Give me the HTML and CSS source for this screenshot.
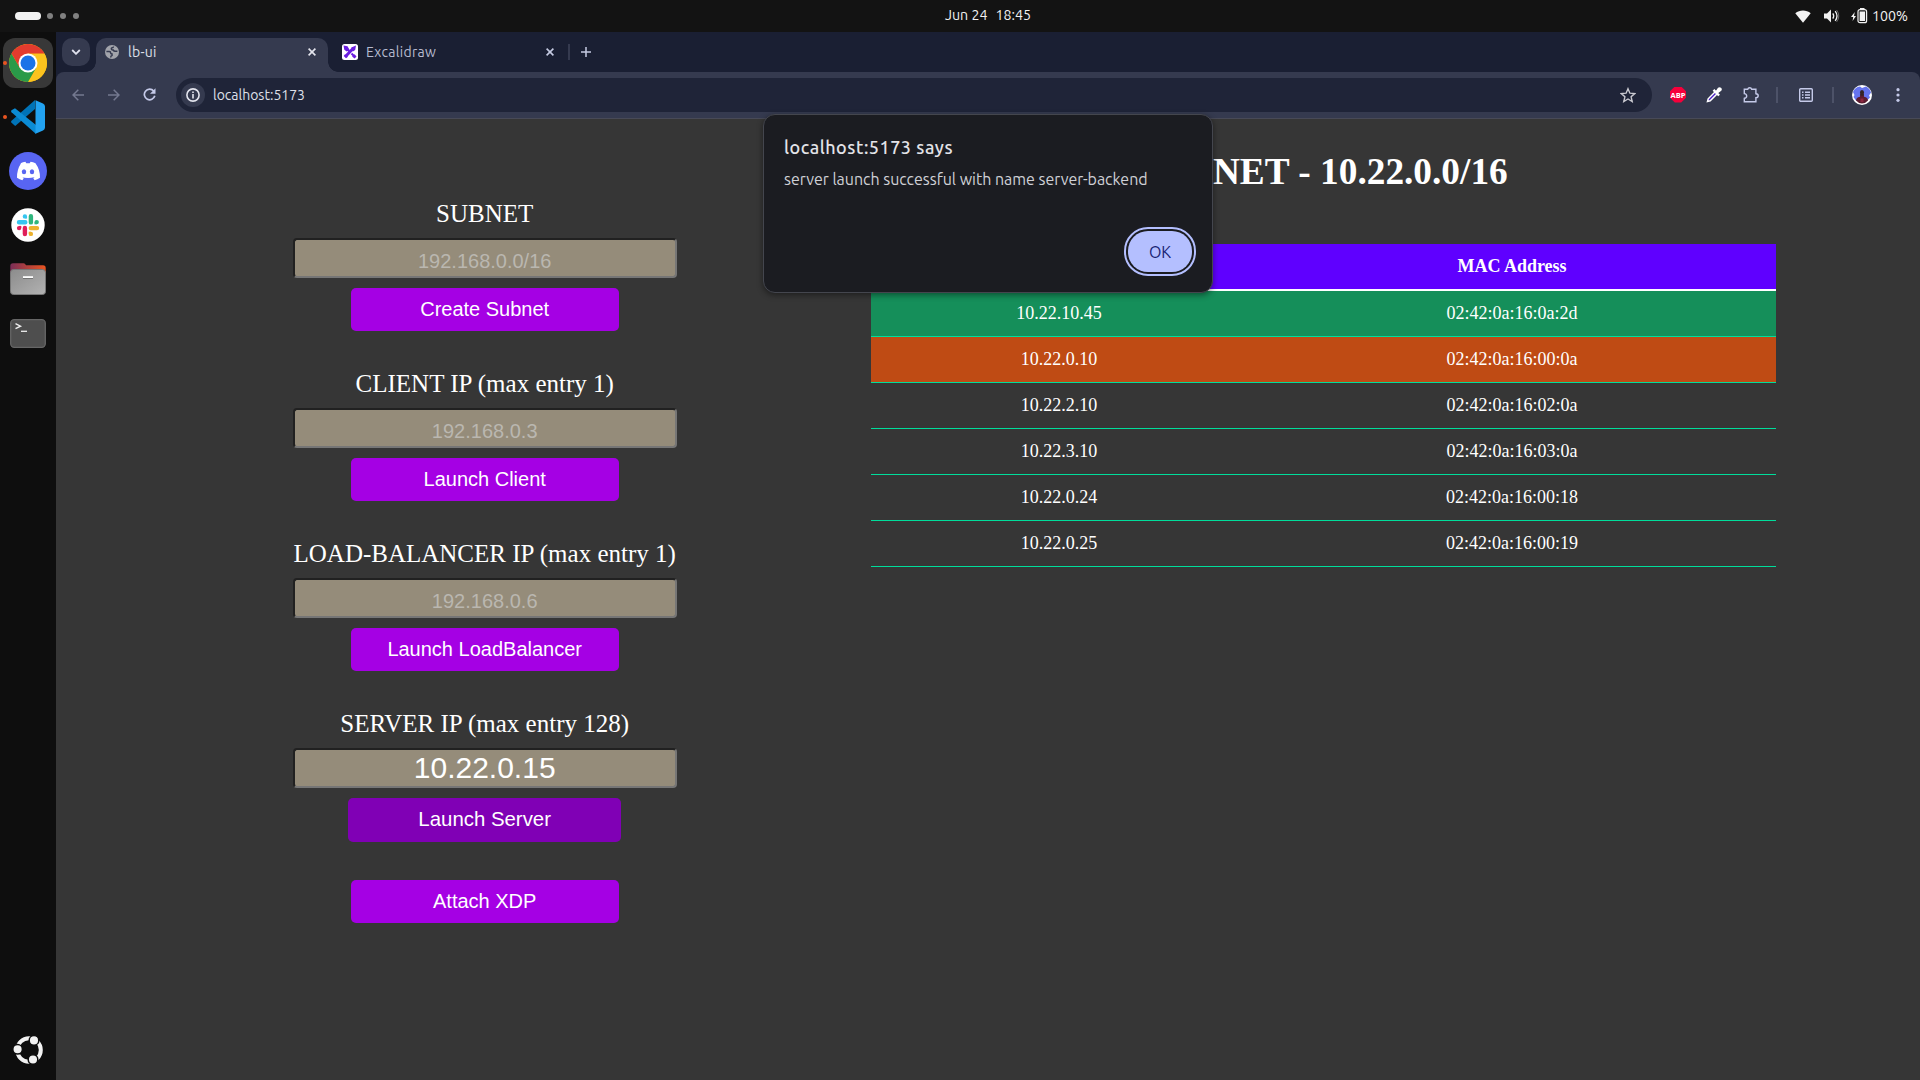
FILE: index.html
```html
<!DOCTYPE html>
<html lang="en">
<head>
<meta charset="utf-8">
<title>lb-ui</title>
<link rel="stylesheet" href="styles.css">
</head>
<body>
<div class="desktop">
  <header class="topbar">
    <div class="workspaces"><i class="ws-active"></i><i class="ws"></i><i class="ws"></i><i class="ws"></i></div>
    <div class="clock"><span>Jun 24</span><span>18:45</span></div>
    <div class="tray">
      <svg class="wifi" width="16" height="13" viewBox="0 0 16 13"><path d="M.3 3.2C4.600-.5 11.400-.5 15.700 3.200L8 12.700z" fill="#f2f2f2"/></svg>
      <svg class="volume" width="16" height="14" viewBox="0 0 16 14"><path d="M0 4.500h3L7 .5v13L3 9.500H0z" fill="#f2f2f2"/><path d="M8.800 4.400q1.800 2.600 0 5.200M11.200 2.200q3.600 4.800 0 9.600" fill="none" stroke="#f2f2f2" stroke-width="1.300"/><path d="M12.600 1q4.400 6 0 12" fill="none" stroke="#888" stroke-width=".7"/></svg>
      <svg class="battery" width="17" height="16" viewBox="0 0 17 16"><path d="M3.800 4L0 9h2.200L1.600 13 5 8H3z" fill="#f2f2f2"/><rect x="7" y="1.700" width="8.600" height="13" rx="2" fill="none" stroke="#f2f2f2" stroke-width="1.200"/><rect x="8.600" y="3.500" width="5.500" height="9.500" fill="#f2f2f2"/><path d="M9 0h4.500v1.500H9z" fill="#f2f2f2"/></svg>
      <span class="percent">100%</span>
    </div>
  </header>

  <nav class="dock">
    <div class="app active running">
      <svg width="38" height="38" viewBox="0 0 38 38"><circle cx="19" cy="19" r="19" fill="#fbbc04"/><path d="M19 9.500h16.450A19 19 0 0 1 19 38l8.200-14.200z" fill="#fcc31e"/><path d="M2.550 9.500A19 19 0 0 0 19 38l8.200-14.200L10.800 23.800z" fill="#2a9a49"/><path d="M2.550 9.500A19 19 0 0 1 35.450 9.500H19l-8.200 14.200z" fill="#e33b2e"/><circle cx="19" cy="19" r="9.500" fill="#fff"/><circle cx="19" cy="19" r="7.500" fill="#1a73e8"/></svg>
    </div>
    <div class="app running">
      <svg width="34" height="34" viewBox="0 0 34 34"><path d="M24 0v9L4.200 26 .5 22.700q-.8-1 0-1.900z" fill="#0073b7"/><path d="M.5 12.200q-.8-1 0-1.900L4 8.200 25 25v9L.5 12.200z" fill="#0b8bd4"/><path d="M24.500.2L32 3.600q2 .8 2 3v20.800q0 2.200-2 3l-7.500 3.400V.2z" fill="#22a2f0"/></svg>
    </div>
    <div class="app">
      <svg width="38" height="38" viewBox="0 0 38 38"><circle cx="19" cy="19" r="19" fill="#5865f2"/><path d="M11.500 11.200q2.500-1.200 4.900-1.500l.9 1.500h3.400l.9-1.500q2.500.3 4.900 1.500 4.800 6.800 4.500 14.600-2.600 1.800-5.400 2.400l-1.400-2.200 1.500-.8h-12.400l1.500.8-1.400 2.200q-2.800-.6-5.400-2.400-.300-7.800 4-14.600z" fill="#fff"/><path d="M13 25q6 2 12 0l-.5-1.500h-11z" fill="#fff"/><ellipse cx="15" cy="19.700" rx="2.200" ry="2.500" fill="#5865f2"/><ellipse cx="23" cy="19.700" rx="2.200" ry="2.500" fill="#5865f2"/></svg>
    </div>
    <div class="app">
      <svg width="34" height="34" viewBox="0 0 34 34"><circle cx="17" cy="17" r="16.700" fill="#fff"/><g stroke-width="4.400" stroke-linecap="round"><path d="M8 14.200h6.300M13.900 8.400v.01" stroke="#36c5f0"/><path d="M19.900 8.200v6.200M25.700 14.100v.01" stroke="#2eb67d"/><path d="M19.800 20.100H26M19.900 25.900v.01" stroke="#ecb22e"/><path d="M13.900 20v6.100M8.100 20.100v.01" stroke="#e01e5a"/></g><path d="M13.900 8.400h2.200v2.200h-2.200z" fill="#36c5f0"/><path d="M23.500 14.100h2.200v2.200h-2.200z" fill="#2eb67d"/><path d="M17.700 23.700h2.200v2.200h-2.200z" fill="#ecb22e"/><path d="M8.100 17.900h2.200v2.200H8.100z" fill="#e01e5a"/></svg>
    </div>
    <div class="app">
      <svg width="36" height="32" viewBox="0 0 36 32"><defs><linearGradient id="tab"><stop offset="0" stop-color="#7b2e57"/><stop offset="1" stop-color="#e95420"/></linearGradient><linearGradient id="body" x2="1" y2="1"><stop offset="0" stop-color="#8c8c8c"/><stop offset="1" stop-color="#b2b2b2"/></linearGradient></defs><path d="M3 .200h10.500q1 0 1.600.800l.9 1.200h17q2.700 0 2.700 2.800V20H.3V3q0-2.800 2.700-2.800z" fill="url(#tab)"/><rect x=".5" y="6.500" width="35" height="25" rx="3" fill="url(#body)" stroke="#777"/><path d="M13 13.200h10v1.900H13z" fill="#fff"/><path d="M13 15.200h10v.8H13z" fill="#666"/></svg>
    </div>
    <div class="app">
      <svg width="36" height="29" viewBox="0 0 36 29"><rect x=".7" y=".7" width="34.600" height="27.600" rx="3.500" fill="#4e4e4e" stroke="#666" stroke-width="1.300"/><path d="M5.500 4.700l5 2.500-5 2.500" fill="none" stroke="#eee" stroke-width="1.400"/><path d="M11 12.300h6" stroke="#eee" stroke-width="1.300"/></svg>
    </div>
    <div class="app launcher">
      <svg width="30" height="28" viewBox="0 0 30 28"><circle cx="16" cy="14" r="11.800" fill="none" stroke="#f2f2f2" stroke-width="4"/><g fill="#f2f2f2" stroke="#0e0e0e" stroke-width="1.500"><circle cx="4.600" cy="13.300" r="4.800"/><circle cx="21" cy="4.400" r="4.800"/><circle cx="20" cy="23.500" r="4.800"/></g></svg>
    </div>
  </nav>

  <main class="browser">
    <div class="tabstrip">
      <button class="tabsearch"><svg width="10" height="6" viewBox="0 0 10 6"><path d="M1.200 1l3.800 3.800L8.800 1" fill="none" stroke="#e0e2ee" stroke-width="1.800"/></svg></button>
      <div class="tab current">
        <svg width="14" height="14" viewBox="0 0 14 14"><circle cx="7" cy="7" r="7" fill="#a2a4ab"/><path d="M1.400 6.500h3q1.200 0 1.200 1.200T7 8.900v1.500q-1.300.1-1.300 2.100M8.500 1.500q-.2 1.300-1.300 1.300-.9 0-.9 1t1.100 1.100h.8q.6 1.400 1.900 1.400h2.300" fill="none" stroke="#353a4f" stroke-width="1.500"/></svg>
        <span>lb-ui</span>
        <svg class="close" width="8" height="8" viewBox="0 0 8 8"><path d="M.6.6l6.800 6.800M7.400.6L.6 7.400" stroke="#e4e5ee" stroke-width="1.600"/></svg>
      </div>
      <div class="tab other">
        <svg width="16" height="16" viewBox="0 0 16 16"><rect width="16" height="16" rx="2.500" fill="#fff"/><path d="M3.500 12.500L11.500 4" stroke="#6a1ee0" stroke-width="3"/><path d="M5 5l2.300 2.300M9.500 9.500l3 3" stroke="#6a1ee0" stroke-width="2"/><path d="M1.500 1.500l4 .8 2 3.400-2.800 1.800-2.400-1.800zM9.300 3.400l4.700-2-.8 4.600-2.300 1.600zM1.700 12l2.300 2.300 2-1.600L3 10.200zM12.500 10.300l2 2.200-1.900 2-2.500-2z" fill="#6a1ee0"/></svg>
        <span>Excalidraw</span>
        <svg class="close" width="8" height="8" viewBox="0 0 8 8"><path d="M.6.6l6.800 6.800M7.400.6L.6 7.400" stroke="#c5cae2" stroke-width="1.600"/></svg>
      </div>
      <i class="tabsep"></i>
      <svg class="newtab" width="10" height="10" viewBox="0 0 10 10"><path d="M5 0v10M0 5h10" stroke="#c5cae2" stroke-width="1.500"/></svg>
    </div>

    <div class="toolbar">
      <svg class="back" width="12" height="12" viewBox="0 0 12 12"><path d="M12 6H1.200M6.300.7L1 6l5.300 5.300" fill="none" stroke="#747990" stroke-width="1.500"/></svg>
      <svg class="forward" width="12" height="12" viewBox="0 0 12 12"><path d="M0 6h10.800M5.700.7L11 6l-5.300 5.300" fill="none" stroke="#747990" stroke-width="1.500"/></svg>
      <svg class="reload" width="13" height="13" viewBox="0 0 13 13"><path d="M10.700 3A5.300 5.300 0 1 0 11.800 7.800" fill="none" stroke="#c5cae9" stroke-width="1.700"/><path d="M12.500.3v5.500H7z" fill="#c5cae9"/></svg>
      <div class="omnibox">
        <span class="siteinfo"><svg width="14" height="14" viewBox="0 0 14 14"><circle cx="7" cy="7" r="6.100" fill="none" stroke="#e4e5ee" stroke-width="1.600"/><path d="M7 6v4.500M7 3.400v1.700" stroke="#e4e5ee" stroke-width="1.600"/></svg></span>
        <span class="url">localhost:5173</span>
        <svg class="star" width="16" height="16" viewBox="0 0 16 16"><path d="M8 1.700l1.900 4.500 4.800.4-3.600 3.200 1.100 4.700L8 12l-4.200 2.500 1.100-4.700L1.300 6.600l4.800-.4z" fill="none" stroke="#c9c9d0" stroke-width="1.400"/></svg>
      </div>
      <span class="abp">ABP</span>
      <svg class="picker" width="16" height="16" viewBox="0 0 16 16"><path d="M1.500 14.500l.7-2.700 7-7 2 2-7 7z" fill="#4c22c4" stroke="#fff" stroke-width="1.500"/><path d="M7.500 2.900l5.600 5.600M9.500 6.500l3.800-3.800" stroke="#fff" stroke-width="2.400"/><path d="M9.500 4.500L12 .8q1.500-1.300 3 0t.3 3L11.500 6.500z" fill="#fff"/></svg>
      <svg class="puzzle" width="17" height="16" viewBox="0 0 17 16"><path d="M1.300 2.300h3.400q.4-1.600 2-1.600t2 1.600h4.200v4.400q2.300.2 2.300 2t-2.300 2v4.100H1.300v-3.500q2.400-.2 2.400-2.300T1.300 6.600z" fill="none" stroke="#c5cae9" stroke-width="1.400"/></svg>
      <i class="sep"></i>
      <svg class="reader" width="14" height="14" viewBox="0 0 14 14"><rect x=".7" y=".7" width="12.600" height="12.600" rx="1" fill="none" stroke="#c5cae9" stroke-width="1.400"/><path d="M3 4.200h1.500M6 4.200h5M3 7h1.500M6 7h5M3 9.800h1.500M6 9.800h5" stroke="#c5cae9" stroke-width="1.400"/></svg>
      <i class="sep"></i>
      <svg class="avatar" width="20" height="20" viewBox="0 0 20 20"><circle cx="10" cy="10" r="10" fill="#fff"/><path d="M1 7Q3 2 8 1.500L10 3l4-1.500q4 2 5 6l-2 3 1 2-3 3H4L1.500 12l1-2z" fill="#6573ef"/><path d="M4 15.500q0-3 4-3.800L8.200 9h3.600l.2 2.700q4 .8 4 3.800-2.500 3-6 3t-6-3z" fill="#5c1c30"/><path d="M8 7.500Q7.800 5 10 5t2 2.500l-.5 3.200h-3z" fill="#352327"/><path d="M8.500 13.500h3V17h-3z" fill="#8c2740"/></svg>
      <svg class="more" width="4" height="14" viewBox="0 0 4 14"><g fill="#c5cae9"><circle cx="2" cy="1.700" r="1.600"/><circle cx="2" cy="7" r="1.600"/><circle cx="2" cy="12.300" r="1.600"/></g></svg>
    </div>

    <div class="page">
      <section class="controls">
        <div class="group"><label>SUBNET</label><input type="text" placeholder="192.168.0.0/16"><button class="action">Create Subnet</button></div>
        <div class="group"><label>CLIENT IP (max entry 1)</label><input type="text" placeholder="192.168.0.3"><button class="action">Launch Client</button></div>
        <div class="group"><label>LOAD-BALANCER IP (max entry 1)</label><input type="text" placeholder="192.168.0.6"><button class="action">Launch LoadBalancer</button></div>
        <div class="group"><label>SERVER IP (max entry 128)</label><input type="text" value="10.22.0.15"><button class="action pressed">Launch Server</button></div>
        <button class="action">Attach XDP</button>
      </section>
      <section class="network">
        <h1>SUBNET - 10.22.0.0/16</h1>
        <table>
          <colgroup><col class="ip"><col class="mac"></colgroup>
          <thead><tr><th>IP Address</th><th>MAC Address</th></tr></thead>
          <tbody>
            <tr class="client"><td>10.22.10.45</td><td>02:42:0a:16:0a:2d</td></tr>
            <tr class="balancer"><td>10.22.0.10</td><td>02:42:0a:16:00:0a</td></tr>
            <tr><td>10.22.2.10</td><td>02:42:0a:16:02:0a</td></tr>
            <tr><td>10.22.3.10</td><td>02:42:0a:16:03:0a</td></tr>
            <tr><td>10.22.0.24</td><td>02:42:0a:16:00:18</td></tr>
            <tr><td>10.22.0.25</td><td>02:42:0a:16:00:19</td></tr>
          </tbody>
        </table>
      </section>
    </div>

    <div class="dialog" role="alertdialog">
      <h2>localhost:5173 says</h2>
      <p>server launch successful with name server-backend</p>
      <button class="ok">OK</button>
    </div>
  </main>
</div>
</body>
</html>
```
FILE: styles.css
```css
* { box-sizing: border-box; }
body { margin: 0; background: #363636; overflow: hidden; }
svg { display: block; flex: none; }
button { border: 0; padding: 0; }

.desktop {
  display: grid;
  grid-template: 32px 1048px / 56px 1864px;
  width: 1920px;
  height: 1080px;
  font-family: Ubuntu, "Noto Sans", sans-serif;
}

/* System bar */
.topbar {
  grid-column: 1 / 3;
  display: grid;
  grid-template-columns: 1fr auto 1fr;
  align-items: center;
  background: #131313;
  color: #f2f2f2;
  font-size: 14.2px;
}
.workspaces { display: flex; align-items: center; gap: 7px; padding-left: 15px; }
.ws-active { width: 26px; height: 8px; border-radius: 4px; background: #f2f2f2; margin-right: -1px; }
.ws { width: 6px; height: 6px; border-radius: 50%; background: #808080; }
.clock { display: flex; gap: 8px; margin-left: 64px; padding-right: 8px; padding-bottom: 2px; }
.tray { display: flex; align-items: center; justify-content: flex-end; padding-right: 12px; }
.volume { margin-left: 13px; }
.battery { margin-left: 11px; margin-right: 4px; }

/* Dock */
.dock {
  display: flex;
  flex-direction: column;
  align-items: center;
  gap: 4px;
  padding: 6px 0 5px;
  background: #0e0e0e;
}
.app {
  position: relative;
  display: flex;
  align-items: center;
  justify-content: center;
  width: 50px;
  height: 50px;
  flex: none;
}
.app.active { background: #383838; border-radius: 12px; }
.app.running::before {
  content: "";
  position: absolute;
  left: 0;
  top: 23px;
  width: 4px;
  height: 4px;
  border-radius: 50%;
  background: #e95420;
}
.launcher { margin-top: auto; padding-right: 1px; }

/* Browser */
.browser { position: relative; display: flex; flex-direction: column; background: #1a1f33; }
.tabstrip { display: flex; align-items: flex-start; height: 40px; padding: 6px 0 0 6px; }
.tabsearch {
  display: flex;
  align-items: center;
  justify-content: center;
  width: 28px;
  height: 28px;
  border-radius: 10px;
  background: #353a4f;
}
.tab { display: flex; align-items: center; color: #dfe0ea; font-size: 14px; letter-spacing: .3px; }
.tab.current {
  position: relative;
  width: 232px;
  height: 34px;
  margin-left: 6px;
  padding: 0 12px 6px 9px;
  border-radius: 10px 10px 0 0;
  background: #353a4f;
}
.tab.current::before, .tab.current::after {
  content: "";
  position: absolute;
  bottom: 0;
  width: 10px;
  height: 10px;
}
.tab.current::before { left: -10px; background: radial-gradient(circle at 0 0, transparent 9.5px, #353a4f 10px); }
.tab.current::after { right: -10px; background: radial-gradient(circle at 100% 0, transparent 9.5px, #353a4f 10px); }
.tab span { margin-left: 9px; }
.tab .close { margin-left: auto; }
.tab.other { width: 226px; height: 28px; padding-left: 14px; padding-right: 0; color: #b7bbd0; }
.tab.other span { margin-left: 8px; }
.tabsep { width: 2px; height: 16px; margin: 6px 0 0 14px; background: #353a4f; }
.newtab { margin: 9px 0 0 11px; }

.toolbar {
  display: flex;
  align-items: center;
  height: 47px;
  padding-bottom: 1px;
  border-bottom: 1px solid #484a57;
  border-radius: 8px 8px 0 0;
  background: #353a4f;
}
.back { margin-left: 16px; }
.forward { margin-left: 24px; }
.reload { margin-left: 23px; }
.omnibox {
  display: flex;
  align-items: center;
  width: 1476px;
  height: 34px;
  margin-left: 20px;
  padding: 0 16px 0 5px;
  border-radius: 17px;
  background: #1f2438;
}
.siteinfo {
  display: flex;
  align-items: center;
  justify-content: center;
  width: 24px;
  height: 24px;
  border-radius: 50%;
  background: #353a4f;
}
.url { margin-left: 8px; color: #dfe0ea; font-size: 14px; }
.star { margin-left: auto; }
.abp {
  width: 16px;
  height: 16px;
  margin-left: 18px;
  background: #f6003b;
  clip-path: polygon(30% 0, 70% 0, 100% 30%, 100% 70%, 70% 100%, 30% 100%, 0 70%, 0 30%);
  color: #fff;
  font: bold 7.5px/16px "Open Sans", sans-serif;
  text-align: center;
}
.picker { margin-left: 20px; }
.puzzle { margin-left: 21px; }
.sep { width: 2px; height: 16px; background: #4d5268; }
.puzzle + .sep { margin-left: 16px; }
.reader { margin-left: 21px; }
.reader + .sep { margin-left: 19px; }
.avatar { margin-left: 18px; }
.more { margin-left: 24px; }

/* Page */
.page { display: flex; height: 961px; background: #363636; color: #fff; font-family: "Liberation Serif", serif; }
.controls { display: flex; flex-direction: column; align-items: center; width: 857.4px; padding-top: 79px; }
.group { display: flex; flex-direction: column; align-items: center; width: 384px; height: 170px; }
label { height: 40px; font-size: 25px; line-height: 32px; white-space: nowrap; }
input {
  width: 384px;
  height: 40px;
  padding: 0 2px;
  border: 2px inset #767676;
  border-radius: 4px;
  background: #958c7a;
  color: #fff;
  font: 30px "Liberation Sans", sans-serif;
  text-align: center;
}
input::placeholder { color: #bab7b0; font-size: 20px; }
.action {
  width: 268px;
  height: 43px;
  border-radius: 5px;
  background: #a500e4;
  color: #fff;
  font: 20px "Liberation Sans", sans-serif;
}
.group .action { margin-top: 10px; }
.group .action.pressed {
  width: 273.4px;
  height: 44px;
  margin-top: 9.5px;
  padding-bottom: 1px;
  background: #8000b5;
  font-size: 20.4px;
}
.controls > .action { margin-top: 2px; }

.network { margin-left: -42.4px; width: 905px; }
h1 { margin: 31px 0 0 1px; font-size: 37.33px; line-height: 43px; text-align: center; }
table { width: 905px; margin-top: 51px; border-collapse: collapse; table-layout: fixed; font-size: 18px; text-align: center; }
.ip { width: 376px; }
.mac { width: 529px; }
th, td { height: 46px; padding: 0; }
th { height: 46px; background: #5f00ff; border-bottom: 2px solid #fff; }
th:last-child, td:last-child { padding-left: 1px; }
td { border-bottom: 1px solid #00dd9b; }
.client { background: #158f5a; }
.balancer { background: #bf4b14; }

/* Alert */
.dialog {
  position: absolute;
  left: 707px;
  top: 82px;
  display: flex;
  flex-direction: column;
  width: 450px;
  height: 179px;
  padding: 19px 17px 17px 20px;
  border: 1px solid #44464e;
  border-radius: 12px;
  background: #1b1c21;
  box-shadow: 0 2px 6px rgba(0, 0, 0, .45);
  color: #e3e3e8;
}
.dialog h2 { margin: 0; font-size: 18px; font-weight: 500; letter-spacing: .52px; line-height: 26px; white-space: nowrap; }
.dialog p { margin: 7px 0 0; font-size: 16px; letter-spacing: -.02px; line-height: 24px; white-space: nowrap; color: #cfd0d6; }
.ok {
  align-self: flex-end;
  width: 64px;
  height: 41px;
  margin: auto 3px 3px 0;
  border-radius: 20px;
  background: #b4bfff;
  outline: 2px solid #b4bfff;
  outline-offset: 2px;
  color: #182374;
  font: 400 16px Ubuntu, "Noto Sans", sans-serif;
}
```
